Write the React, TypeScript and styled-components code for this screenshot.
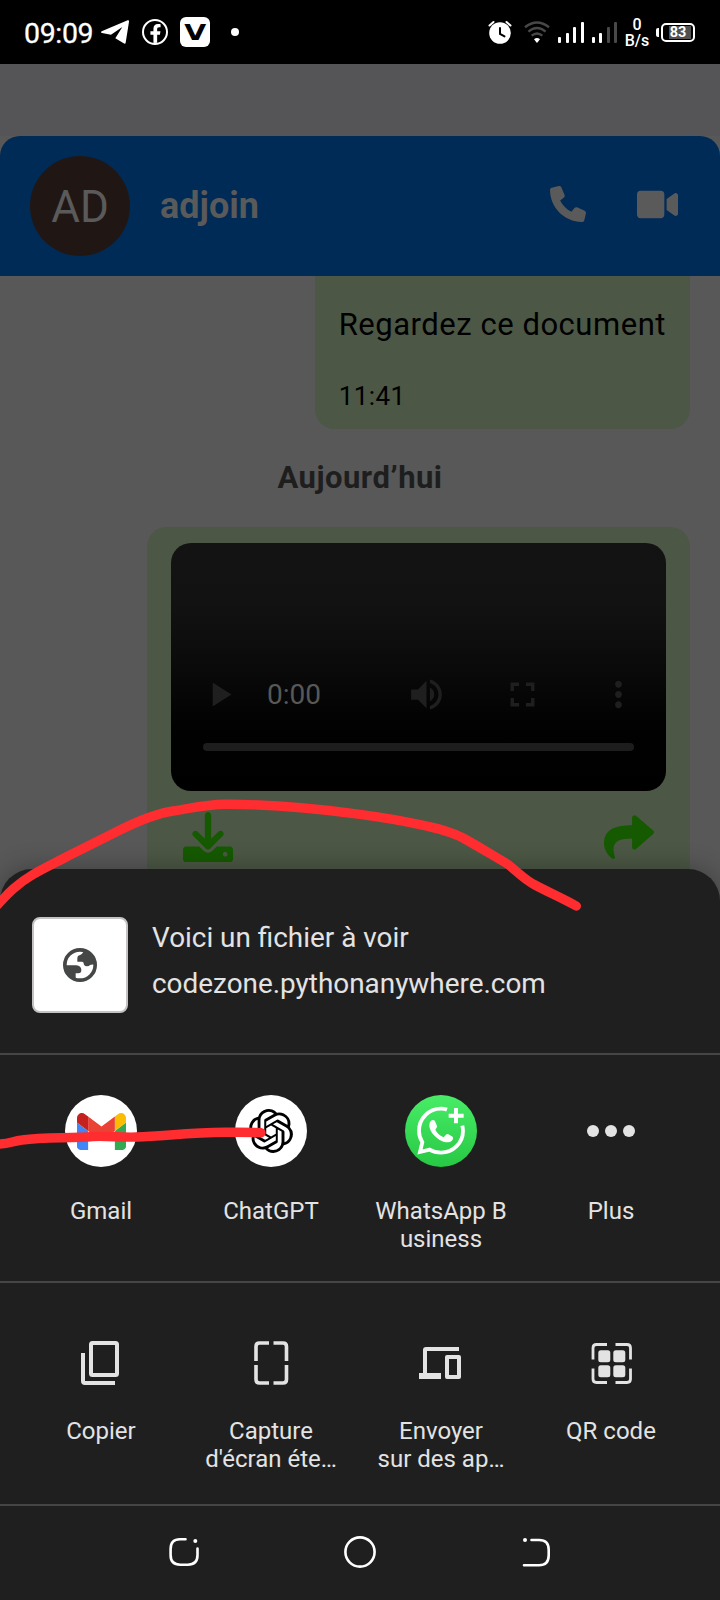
import React from "react";
import styled, { createGlobalStyle } from "styled-components";
import { FaFacebookF, FaShare, FaVideo } from "react-icons/fa";
import { SiOpenai } from "react-icons/si";
import { MdPlayArrow, MdVolumeUp, MdFullscreen, MdMoreVert } from "react-icons/md";

const GlobalStyle = createGlobalStyle`
  *, *::before, *::after { box-sizing: border-box; }
  body { margin: 0; background: #585858; font-family: Roboto, sans-serif; }
  svg { display: block; flex: none; }
`;

const Screen = styled.div`
  position: relative;
  display: flex;
  flex-direction: column;
  width: 720px;
  height: 1600px;
  overflow: hidden;
  background: #585858;
`;

/* ---------- status bar ---------- */

const StatusBar = styled.div`
  display: flex;
  align-items: center;
  justify-content: space-between;
  flex: none;
  height: 64px;
  padding: 0 25px 0 24px;
  background: #000;
  color: #fff;
`;

const StatusGroup = styled.div`
  display: flex;
  align-items: center;
`;

const Clock = styled.span`
  width: 77px;
  padding-top: 4px;
  font-size: 28.5px;
  line-height: 32px;
  font-weight: 400;
  letter-spacing: -0.35px;
  -webkit-text-stroke: 0.3px #fff;
`;

const FacebookBadge = styled.span`
  display: flex;
  align-items: flex-end;
  justify-content: center;
  width: 26px;
  height: 26px;
  margin: 0 12px 0 13px;
  border: 2px solid #fff;
  border-radius: 50%;
  overflow: hidden;
`;

const LetterBadge = styled.span`
  display: flex;
  align-items: center;
  justify-content: center;
  width: 30px;
  height: 30px;
  border-radius: 6px;
  background: #fff;
  color: #000;
  font: 700 21px/32px "DejaVu Sans", sans-serif;

  span { padding-top: 2px; transform: scaleX(1.35); }
`;

const MoreDot = styled.span`
  width: 8px;
  height: 8px;
  margin-left: 21px;
  border-radius: 50%;
  background: #fff;
`;

const WifiSlot = styled.span`
  margin-left: 12px;
`;

const Bars = styled.span`
  display: flex;
  align-items: flex-end;
  gap: 4.5px;
  height: 21px;
  margin-left: 8px;
`;

const Bar = styled.i<{ $h: number; $dim?: boolean }>`
  width: 3px;
  height: ${(p) => p.$h}px;
  border-radius: 1px;
  background: ${(p) => (p.$dim ? "#484848" : "#fff")};
`;

const NetSpeed = styled.span`
  display: flex;
  flex-direction: column;
  align-items: center;
  width: 24px;
  margin: 0 7px 0 8px;
  padding-top: 2px;
  font-size: 16px;
  line-height: 16px;
  font-weight: 500;
`;

const BatteryNub = styled.span`
  width: 3px;
  height: 9px;
  margin-right: 2px;
  border-radius: 2px 0 0 2px;
  background: #fff;
`;

const Battery = styled.span`
  display: flex;
  align-items: center;
  justify-content: center;
  width: 34px;
  height: 19px;
  border: 2px solid #fff;
  border-radius: 5px;
  background: linear-gradient(#505050, #505050) 6px 1px / 22px 13px no-repeat;
  font-size: 14.5px;
  line-height: 15px;
  font-weight: 700;
`;

/* ---------- conversation behind the sheet ---------- */

const TopGap = styled.div`
  flex: none;
  height: 72px;
  background: #555557;
`;

const ChatHeader = styled.header`
  display: flex;
  align-items: center;
  flex: none;
  height: 140px;
  padding: 0 42px 4px 30px;
  border-radius: 20px 20px 0 0;
  background: #002b57;
  color: #5a5a5a;
`;

const Avatar = styled.div`
  display: flex;
  align-items: center;
  justify-content: center;
  width: 100px;
  height: 100px;
  margin-top: 4px;
  padding-top: 2px;
  border-radius: 50%;
  background: #201715;
  font-size: 44px;
`;

const ContactName = styled.h1`
  flex: 1;
  margin: 0 0 0 30px;
  padding-top: 3px;
  font-size: 36px;
  font-weight: 700;
`;

const CallActions = styled.div`
  display: flex;
  align-items: center;
  gap: 51px;
`;

const Messages = styled.main`
  display: flex;
  flex-direction: column;
  align-items: flex-end;
  padding-right: 30px;
`;

const TextBubble = styled.article`
  display: flex;
  flex-direction: column;
  height: 153px;
  padding: 30px 24px 0;
  border-radius: 0 0 20px 20px;
  background: #4c5745;
  color: #000;
`;

const MessageText = styled.p`
  margin: 0;
  font-size: 31px;
  line-height: 38px;
  letter-spacing: 0.53px;
`;

const MessageTime = styled.time`
  margin-top: 36px;
  font-size: 26px;
  line-height: 32px;
  letter-spacing: 0.4px;
`;

const DayLabel = styled.h2`
  align-self: center;
  margin: 31px 0 32px 30px;
  color: #1e1e1e;
  font-size: 31px;
  line-height: 35px;
  font-weight: 700;
  letter-spacing: 0.5px;
`;

const VideoBubble = styled.article`
  width: 543px;
  height: 400px;
  padding: 16px 24px;
  border-radius: 20px 20px 0 0;
  background: #4c5745;
`;

const Player = styled.div`
  display: flex;
  flex-direction: column;
  justify-content: flex-end;
  height: 248px;
  padding-bottom: 40px;
  border-radius: 20px;
  background: linear-gradient(#131313 0%, #121212 24%, #0a0a0a 50%, #010101 76%, #000 100%);
  color: #1f1f1f;
`;

const Controls = styled.div`
  display: flex;
  align-items: center;
  height: 96px;
  margin-bottom: 1px;
`;

const ControlButton = styled.span`
  display: flex;
  align-items: center;
  justify-content: center;
  width: 96px;
  height: 96px;
`;

const Elapsed = styled.span`
  flex: 1;
  color: #585858;
  font-size: 28px;
`;

const Track = styled.div`
  height: 8px;
  margin: 0 32px;
  border-radius: 4px;
  background: #1d1d1d;
`;

const FileActions = styled.div`
  display: flex;
  align-items: center;
  justify-content: space-between;
  height: 50px;
  margin-top: 21px;
  padding: 0 12px;
  color: #155a00;
`;

/* ---------- share sheet ---------- */

const Sheet = styled.section`
  position: absolute;
  inset: 869px 0 0;
  display: flex;
  flex-direction: column;
  border-radius: 32px 32px 0 0;
  background: #1f1f1f;
  color: #e3e3e3;
  box-shadow: 0 0 26px rgba(0, 0, 0, 0.3);
`;

const Preview = styled.div`
  display: flex;
  align-items: center;
  gap: 24px;
  height: 184px;
  padding: 8px 32px 0;
`;

const Thumb = styled.div`
  display: flex;
  align-items: center;
  justify-content: center;
  width: 96px;
  height: 96px;
  border: 2px solid #c4c2c2;
  border-radius: 8px;
  background: #fff;
`;

const PreviewText = styled.div`
  margin-top: -9px;
  font-size: 27.9px;
  line-height: 46px;
`;

const TargetRow = styled.div<{ $height: number; $top: number }>`
  display: grid;
  grid-template-columns: repeat(4, 170px);
  height: ${(p) => p.$height}px;
  padding: ${(p) => p.$top}px 24px 0 16px;
  border-top: 2px solid #454545;
`;

const Target = styled.div<{ $gap: number }>`
  display: flex;
  flex-direction: column;
  align-items: center;
  gap: ${(p) => p.$gap}px;
`;

const Label = styled.span`
  font-size: 24px;
  line-height: 28px;
  text-align: center;
  white-space: pre;
`;

const Disc = styled.div<{ $fill?: string }>`
  display: flex;
  align-items: center;
  justify-content: center;
  width: 72px;
  height: 72px;
  border-radius: 50%;
  background: ${(p) => p.$fill ?? "transparent"};
  color: #000;
`;

const DotTrio = styled.div`
  display: flex;
  gap: 6px;

  i { width: 12px; height: 12px; border-radius: 50%; background: #e3e3e3; }
`;

const NavBar = styled.nav`
  display: flex;
  align-items: center;
  justify-content: center;
  gap: 144px;
  height: 96px;
  padding-bottom: 2px;
  border-top: 2px solid #454545;
`;

const Scribble = styled.svg`
  position: absolute;
  inset: 0;
  fill: none;
  stroke: #ff2c30;
  stroke-width: 9.4px;
  stroke-linecap: round;
  stroke-linejoin: round;
  pointer-events: none;
`;

/* ---------- drawings ---------- */

const PlaneIcon = () => (
  <svg width="28" height="24" viewBox="0 0 84 72" fill="#fff">
    <path d="M2 34 80 1q5-2 4 4L74 68q-1 5-6 2L43 55 64 21 30 44 3 39q-5-2-1-5z" />
  </svg>
);

const AlarmIcon = () => (
  <svg width="24" height="24" viewBox="0 0 24 24" fill="none" stroke="#fff" strokeWidth="2" strokeLinecap="round">
    <circle cx="12" cy="13" r="10.8" fill="#fff" stroke="none" />
    <path d="M1.500 5.500 5.500 2M22.500 5.500 18.500 2" />
    <path d="M12 8v6l4.500 2.400" stroke="#000" />
  </svg>
);

const WifiIcon = () => (
  <svg width="26" height="22" viewBox="0 0 26 22" fill="none" stroke="#484848" strokeWidth="2.4">
    <path d="M1 6.300Q13-3.300 25 6.300M4.400 10.600q8.600-7 17.200 0M7.600 14.600q5.400-4.400 10.800 0" />
    <path d="M10 18.200q3-2.400 6 0L13 22z" fill="#fff" stroke="none" />
  </svg>
);

const PhoneIcon = () => (
  <svg width="36" height="36" viewBox="0 0 512 512" fill="currentColor">
    <path d="M511.200 387l-23.250 100.800c-3.266 14.250-15.790 24.220-30.460 24.220C205.200 512 0 306.800 0 54.500c0-14.660 9.969-27.200 24.220-30.450l100.800-23.250C139.700-2.602 154.700 5.018 160.800 18.920l46.520 108.500c5.438 12.780 1.770 27.670-8.980 36.450L144.500 207.100c33.980 69.220 90.260 125.500 159.500 159.500l44.080-53.800c8.688-10.780 23.690-14.510 36.470-8.975l108.500 46.510C506.100 357.200 514.600 372.400 511.200 387z" />
  </svg>
);

const DownloadIcon = () => (
  <svg width="50" height="50" viewBox="0 0 512 512" fill="currentColor">
    <path d="M480 352h-133.500l-45.250 45.250C289.200 409.300 273.100 416 256 416s-33.160-6.656-45.250-18.750L165.500 352H32c-17.670 0-32 14.330-32 32v96c0 17.670 14.330 32 32 32h448c17.670 0 32-14.330 32-32v-96C512 366.300 497.700 352 480 352zM432 456c-13.200 0-24-10.800-24-24c0-13.200 10.800-24 24-24s24 10.800 24 24C456 445.200 445.200 456 432 456zM233.400 374.600C239.600 380.900 247.800 384 256 384s16.380-3.125 22.620-9.375l128-128c12.490-12.500 12.490-32.750 0-45.250c-12.500-12.500-32.760-12.500-45.250 0L288 274.800V32c0-17.670-14.330-32-32-32C238.300 0 224 14.330 224 32v242.800L150.600 201.400c-12.490-12.500-32.750-12.500-45.250 0c-12.490 12.500-12.490 32.750 0 45.250L233.400 374.600z" />
  </svg>
);

const GlobeIcon = () => (
  <svg width="34" height="34" viewBox="0 0 102 102">
    <circle cx="51" cy="51" r="45.500" fill="#fff" stroke="#444746" strokeWidth="11" />
    <path
      d="M62 8C58 20 50 21 46 23q-3 2-3 8v10h14q5 0 5 5 0 8 9 9 8 0 10-4 6-3 13-1Q98 22 62 8zM8 52h32q15 2 15 14 0 10-9 10h-8v18Q8 86 8 52z"
      fill="#444746"
    />
  </svg>
);

const GmailIcon = () => (
  <svg width="49" height="37" viewBox="52 42 88 66">
    <path fill="#4285f4" d="M58 108h14V74L52 59v43c0 3.320 2.690 6 6 6" />
    <path fill="#34a853" d="M120 108h14c3.320 0 6-2.690 6-6V59l-20 15" />
    <path fill="#fbbc04" d="M120 48v26l20-15v-8c0-7.420-8.470-11.650-14.400-7.200" />
    <path fill="#ea4335" d="M72 74V48l24 18 24-18v26L96 92" />
    <path fill="#c5221f" d="M52 51v8l20 15V48l-5.600-4.200c-5.940-4.450-14.400-.22-14.400 7.200" />
  </svg>
);

const WhatsAppBusinessIcon = () => (
  <svg width="72" height="72" viewBox="0 0 216 216" fill="#fff">
    <path
      d="M126 44Q118 41 108 41C71 41 42 71 42 108q0 18 10 34l-7 29 29-7q15 9 34 9c37 0 66-30 66-65 0-6-1-11-2-16"
      fill="none"
      stroke="#fff"
      strokeWidth="11.500"
    />
    <path d="M147 39h12v17h17v12h-17v17h-12V68h-16V56h16z" />
    <path d="M80 76q7-3 10 3l6 14q1 4-5 11 8 16 25 23l7-8q3-3 7-1l13 7q2 1 1 6-3 10-15 11c-24 1-57-28-56-52q0-10 7-14z" />
  </svg>
);

const CopyIcon = () => (
  <svg width="44" height="44" viewBox="0 0 44 44" fill="none" stroke="currentColor" strokeWidth="4" strokeLinejoin="round">
    <rect x="12" y="2" width="26" height="32" rx="1.500" />
    <path d="M4 12v28q0 2 2 2h30" />
  </svg>
);

const CaptureIcon = () => (
  <svg width="44" height="44" viewBox="0 0 44 44" fill="none" stroke="currentColor" strokeWidth="3.600">
    <path d="M20 2H10.500Q7 2 7 5.500V20M24.500 2H34Q37.500 2 37.500 5.500V20M20 42h-9.500q-3.500 0-3.500-3.500V24M24.500 42H34q3.500 0 3.500-3.500V24" />
  </svg>
);

const DevicesIcon = () => (
  <svg width="44" height="44" viewBox="0 0 44 44" fill="none" stroke="currentColor" strokeWidth="4">
    <path d="M40 8H7q-1 0-1 1v26" />
    <path d="M0 32h22v6H0z" fill="currentColor" stroke="none" />
    <rect x="28" y="16" width="12" height="20" strokeLinejoin="round" />
  </svg>
);

const QrIcon = () => (
  <svg width="44" height="44" viewBox="0 0 44 44" fill="currentColor">
    <path
      d="M18 3.500H7.500Q4 3.500 4 7v11.500M26.500 3.500H38q3.500 0 3.500 3.500v11.500M18 41.500H7.500Q4 41.500 4 38V27.500M26.500 41.500H38q3.500 0 3.500-3.500V27.500"
      fill="none"
      stroke="currentColor"
      strokeWidth="2.800"
    />
    <rect x="9.300" y="9.300" width="12" height="12" rx="2.500" />
    <rect x="24.300" y="9.300" width="12" height="12" rx="2.500" />
    <rect x="9.300" y="24.300" width="12" height="12" rx="2.500" />
    <rect x="24.300" y="24.300" width="12" height="12" rx="2.500" />
  </svg>
);

const navStroke = { fill: "none", stroke: "#fff", strokeWidth: 2.6, strokeLinecap: "round" as const };

const RecentsIcon = () => (
  <svg width="32" height="32" viewBox="0 0 32 32" {...navStroke}>
    <path d="M17.500 3.300h-5.500Q2.600 3.300 2.600 13v6q0 9.700 9.600 9.700h7.600q9.700 0 9.700-9.700v-6.500" />
    <circle cx="27.300" cy="5" r="2" fill="#fff" stroke="none" />
  </svg>
);

const HomeIcon = () => (
  <svg width="32" height="32" viewBox="0 0 32 32" {...navStroke}>
    <circle cx="16" cy="16" r="14.600" />
  </svg>
);

const BackIcon = () => (
  <svg width="32" height="32" viewBox="0 0 32 32" {...navStroke}>
    <path d="M11.500 4h7.500q9.700 0 9.700 9.700v5.600q0 10-9.700 10H4" />
    <circle cx="5" cy="4" r="2" fill="#fff" stroke="none" />
  </svg>
);

/* ---------- data ---------- */

const apps = [
  { label: "Gmail", icon: <Disc $fill="#fff"><GmailIcon /></Disc> },
  { label: "ChatGPT", icon: <Disc $fill="#fff"><SiOpenai size={44} /></Disc> },
  {
    label: "WhatsApp B\nusiness",
    icon: <Disc $fill="linear-gradient(#48ec67, #27c844)"><WhatsAppBusinessIcon /></Disc>,
  },
  { label: "Plus", icon: <Disc><DotTrio><i /><i /><i /></DotTrio></Disc> },
];

const actions = [
  { label: "Copier", icon: <CopyIcon /> },
  { label: "Capture\nd'écran éte…", icon: <CaptureIcon /> },
  { label: "Envoyer\nsur des ap…", icon: <DevicesIcon /> },
  { label: "QR code", icon: <QrIcon /> },
];

export default function App() {
  return (
    <Screen>
      <GlobalStyle />
      <StatusBar>
        <StatusGroup>
          <Clock>09:09</Clock>
          <PlaneIcon />
          <FacebookBadge><FaFacebookF size={19} /></FacebookBadge>
          <LetterBadge><span>V</span></LetterBadge>
          <MoreDot />
        </StatusGroup>
        <StatusGroup>
          <AlarmIcon />
          <WifiSlot><WifiIcon /></WifiSlot>
          <Bars><Bar $h={6} /><Bar $h={10} /><Bar $h={15.5} /><Bar $h={21} /></Bars>
          <Bars><Bar $h={6} /><Bar $h={10} /><Bar $h={15.5} $dim /><Bar $h={21} $dim /></Bars>
          <NetSpeed><span>0</span><span>B/s</span></NetSpeed>
          <BatteryNub />
          <Battery>83</Battery>
        </StatusGroup>
      </StatusBar>

      <TopGap />
      <ChatHeader>
        <Avatar>AD</Avatar>
        <ContactName>adjoin</ContactName>
        <CallActions>
          <PhoneIcon />
          <FaVideo size={41} />
        </CallActions>
      </ChatHeader>

      <Messages>
        <TextBubble>
          <MessageText>Regardez ce document</MessageText>
          <MessageTime>11:41</MessageTime>
        </TextBubble>
        <DayLabel>Aujourd’hui</DayLabel>
        <VideoBubble>
          <Player>
            <Controls>
              <ControlButton><MdPlayArrow size={41} /></ControlButton>
              <Elapsed>0:00</Elapsed>
              <ControlButton><MdVolumeUp size={41} /></ControlButton>
              <ControlButton><MdFullscreen size={41} /></ControlButton>
              <ControlButton><MdMoreVert size={41} /></ControlButton>
            </Controls>
            <Track />
          </Player>
          <FileActions>
            <DownloadIcon />
            <FaShare size={50} />
          </FileActions>
        </VideoBubble>
      </Messages>

      <Sheet>
        <Preview>
          <Thumb><GlobeIcon /></Thumb>
          <PreviewText>
            <div>Voici un fichier à voir</div>
            <div>codezone.pythonanywhere.com</div>
          </PreviewText>
        </Preview>
        <TargetRow $height={228} $top={40}>
          {apps.map((a) => (
            <Target key={a.label} $gap={30}>
              {a.icon}
              <Label>{a.label}</Label>
            </Target>
          ))}
        </TargetRow>
        <TargetRow $height={223} $top={58}>
          {actions.map((a) => (
            <Target key={a.label} $gap={32}>
              {a.icon}
              <Label>{a.label}</Label>
            </Target>
          ))}
        </TargetRow>
        <NavBar>
          <RecentsIcon />
          <HomeIcon />
          <BackIcon />
        </NavBar>
      </Sheet>

      <Scribble width="720" height="1600" viewBox="0 0 720 1600">
        <path d="M-4 906.500C5 897 15 885 33 874.500C44 868 55 863 67 856.500L118 831C138 821 156 813.500 173 811C190 808.500 205 804.500 225 804.300C270 804 320 809 360 814.300Q395 819 420 824.700C440 829 452 832 463 838C476 845 492 855 506.700 863.500C516 870 522 878 535 885C548 892 562 898 576.300 906" />
        <path d="M-5 1144C8 1145 12 1141 22 1140C45 1137 70 1138.500 93 1136.500C110 1136 120 1137.500 137 1137C165 1136 190 1132.500 225 1132.300Q245 1132 261 1132.700" />
      </Scribble>
    </Screen>
  );
}
